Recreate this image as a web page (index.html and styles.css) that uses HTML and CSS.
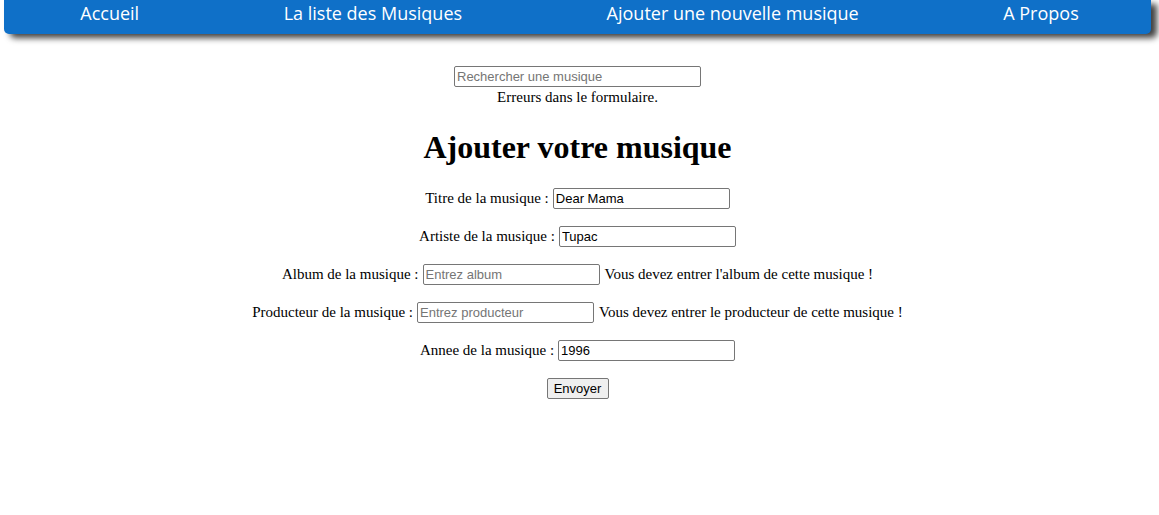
FILE: index.html
```html
<!DOCTYPE html>
<html lang="fr">
<head>
<meta charset="utf-8">
<title>Ajouter une musique</title>
<link rel="stylesheet" href="styles.css">
</head>
<body>
<nav class="topbar">
  <a href="#" class="topbar-link">Accueil</a>
  <a href="#" class="topbar-link">La liste des Musiques</a>
  <a href="#" class="topbar-link">Ajouter une nouvelle musique</a>
  <a href="#" class="topbar-link">A Propos</a>
</nav>
<main class="content">
  <div class="search">
    <input type="text" class="field search-field" placeholder="Rechercher une musique">
  </div>
  <div class="form-errors">Erreurs dans le formulaire.</div>
  <h1 class="title">Ajouter votre musique</h1>
  <form class="music-form">
    <div class="row"><label>Titre de la musique :</label><input type="text" class="field" value="Dear Mama"></div>
    <div class="row"><label>Artiste de la musique :</label><input type="text" class="field" value="Tupac"></div>
    <div class="row"><label>Album de la musique :</label><input type="text" class="field" placeholder="Entrez album"><span class="err">Vous devez entrer l'album de cette musique !</span></div>
    <div class="row"><label>Producteur de la musique :</label><input type="text" class="field" placeholder="Entrez producteur"><span class="err">Vous devez entrer le producteur de cette musique !</span></div>
    <div class="row"><label>Annee de la musique :</label><input type="text" class="field" value="1996"></div>
    <div class="row"><button type="button" class="submit">Envoyer</button></div>
  </form>
</main>
</body>
</html>
```

FILE: styles.css
```css
html, body {
  margin: 0;
  padding: 0;
  background: #fff;
}
body {
  font-family: "Liberation Serif", "Times New Roman", serif;
  font-size: 15px;
  color: #000;
}
.topbar {
  display: flex;
  justify-content: space-around;
  align-items: center;
  height: 34px;
  margin: 0 8px 0 4px;
  padding-left: 4px;
  background: #0f70c8;
  border-radius: 0 0 5px 5px;
  box-shadow: 6px 4px 6px rgba(0, 0, 0, 0.75);
  font-family: "Open Sans", "Noto Sans", sans-serif;
  font-size: 18px;
}
.topbar-link {
  color: #fff;
  text-decoration: none;
  line-height: 26px;
  padding-bottom: 8px;
}
.content {
  margin: 0 8px 0 4px;
  text-align: center;
}
.search {
  padding-top: 32px;
  display: flex;
  justify-content: center;
  line-height: 0;
}
.field {
  box-sizing: border-box;
  width: 177px;
  height: 21px;
  padding: 1px 2px;
  margin: 0;
  border: 1px solid #767676;
  border-radius: 2px;
  font-family: "Liberation Sans", Arial, sans-serif;
  font-size: 13px;
  color: #000;
  background: #fff;
}
.field::placeholder {
  color: #757575;
}
.search-field {
  width: 247px;
}
.form-errors {
  line-height: 18px;
  margin-top: 1px;
}
.title {
  font-size: 32px;
  font-weight: bold;
  line-height: 37px;
  margin: 23px 0 0;
}
.music-form {
  display: flex;
  flex-direction: column;
  gap: 17px;
  margin-top: 22px;
}
.row {
  display: flex;
  justify-content: center;
  align-items: center;
  gap: 4px;
  height: 21px;
  line-height: 21px;
}
.err {
  margin-left: 1px;
}
.submit {
  box-sizing: border-box;
  height: 21px;
  width: 62px;
  padding: 1px 6px;
  margin: 0;
  border: 1px solid #767676;
  border-radius: 2px;
  background: #efefef;
  font-family: "Liberation Sans", Arial, sans-serif;
  font-size: 13px;
  color: #000;
}
```
